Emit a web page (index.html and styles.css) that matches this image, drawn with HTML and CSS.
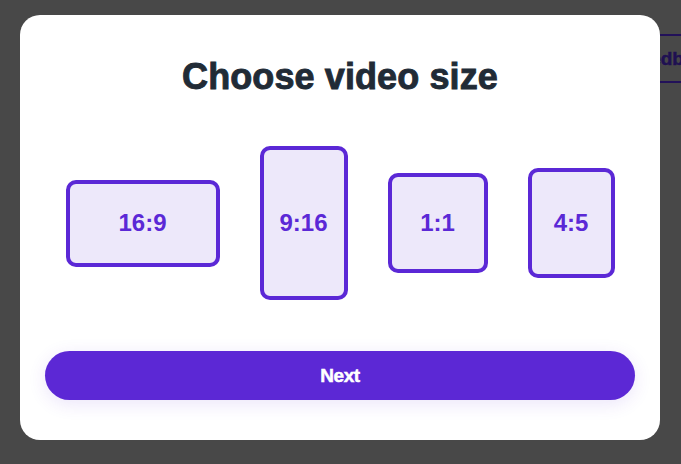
FILE: index.html
```html
<!DOCTYPE html>
<html lang="en">
<head>
<meta charset="utf-8">
<title>Choose video size</title>
<link rel="stylesheet" href="styles.css">
</head>
<body>
  <div class="backdrop-btn">Feedback</div>
  <div class="modal">
    <h1 class="title">Choose video size</h1>
    <div class="sizes">
      <button class="size size-169">16:9</button>
      <button class="size size-916">9:16</button>
      <button class="size size-11">1:1</button>
      <button class="size size-45">4:5</button>
    </div>
    <button class="next">Next</button>
  </div>
</body>
</html>
```

FILE: styles.css
```css
html, body {
  margin: 0;
  padding: 0;
}
body {
  background: #484848;
  width: 681px;
  height: 464px;
  overflow: hidden;
  position: relative;
  font-family: "Liberation Sans", Arial, sans-serif;
  padding: 15px 0 0 20px;
  box-sizing: border-box;
}
.backdrop-btn {
  position: absolute;
  top: 34px;
  left: 606px;
  height: 49px;
  box-sizing: border-box;
  border: 2px solid #221159;
  padding: 0 20px;
  display: flex;
  align-items: center;
  font-size: 19px;
  font-weight: bold;
  color: #1f1052;
  -webkit-text-stroke: 0.5px #1f1052;
  white-space: nowrap;
}
.modal {
  position: relative;
  width: 640px;
  height: 425px;
  box-sizing: border-box;
  background: #ffffff;
  border-radius: 20px;
  padding: 40px 25px 40px;
  display: flex;
  flex-direction: column;
  align-items: stretch;
}
.title {
  margin: 0;
  font-size: 36px;
  line-height: 44px;
  font-weight: bold;
  color: #212b36;
  text-align: center;
  letter-spacing: 0.1px;
  -webkit-text-stroke: 0.9px #212b36;
}
.sizes {
  margin-top: 47px;
  height: 154px;
  display: flex;
  justify-content: center;
  align-items: center;
  gap: 40px;
}
.size {
  box-sizing: border-box;
  border: 4px solid #5b28d6;
  border-radius: 10px;
  background: #ede8fa;
  color: #5b28d6;
  font-family: "Liberation Sans", Arial, sans-serif;
  font-size: 24px;
  font-weight: bold;
  display: flex;
  align-items: center;
  justify-content: center;
  padding: 0;
}
.size-169 { width: 154px; height: 87px; }
.size-916 { width: 88px; height: 154px; }
.size-11 { width: 100px; height: 100px; }
.size-45 { width: 87px; height: 110px; }
.next {
  margin-top: 51px;
  height: 50px;
  border: none;
  border-radius: 25px;
  background: #5c28d5;
  color: #ffffff;
  font-family: "Liberation Sans", Arial, sans-serif;
  font-size: 19px;
  font-weight: bold;
  -webkit-text-stroke: 0.5px #ffffff;
  letter-spacing: -0.4px;
  box-shadow: 0 4px 18px rgba(92, 40, 213, 0.12);
}
```
